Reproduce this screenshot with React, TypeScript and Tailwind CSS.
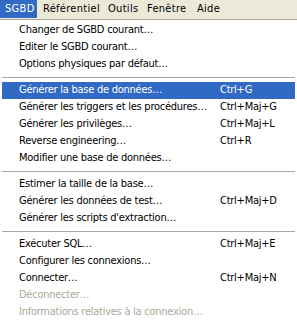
const menus = [
  { label: "SGBD", w: "w-[37px] pl-[5px]" },
  { label: "Référentiel", w: "w-[65px] pl-[6px]" },
  { label: "Outils", w: "w-[39px] pl-[6px]" },
  { label: "Fenêtre", w: "w-[50px] pl-[6px]" },
  { label: "Aide", w: "w-[30px] pl-[6px]" },
];

type Item =
  | { sep: true }
  | { label: string; shortcut?: string; active?: boolean; disabled?: boolean };

const items: Item[] = [
  { label: "Changer de SGBD courant…" },
  { label: "Editer le SGBD courant…" },
  { label: "Options physiques par défaut…" },
  { sep: true },
  { label: "Générer la base de données…", shortcut: "Ctrl+G", active: true },
  { label: "Générer les triggers et les procédures…", shortcut: "Ctrl+Maj+G" },
  { label: "Générer les privilèges…", shortcut: "Ctrl+Maj+L" },
  { label: "Reverse engineering…", shortcut: "Ctrl+R" },
  { label: "Modifier une base de données…" },
  { sep: true },
  { label: "Estimer la taille de la base…" },
  { label: "Générer les données de test…", shortcut: "Ctrl+Maj+D" },
  { label: "Générer les scripts d'extraction…" },
  { sep: true },
  { label: "Exécuter SQL…", shortcut: "Ctrl+Maj+E" },
  { label: "Configurer les connexions…" },
  { label: "Connecter…", shortcut: "Ctrl+Maj+N" },
  { label: "Déconnecter…", disabled: true },
  { label: "Informations relatives à la connexion…", disabled: true },
];

const App = () => {
  return (
    <div className="w-[297px] h-[322px] overflow-hidden bg-white text-[11px] tracking-[-0.25px] text-black font-['DejaVu_Sans_Condensed','Liberation_Sans',sans-serif]">
      {/* menu bar */}
      <div className="flex h-[20px] bg-[#ece9d8] border-b border-[#aca899] tracking-[0.3px]">
        {menus.map((m, i) => (
          <div
            key={m.label}
            className={
              i === 0
                ? `${m.w} h-[18px] flex items-center whitespace-nowrap bg-[#316ac5] text-white`
                : `${m.w} h-[18px] flex items-center whitespace-nowrap`
            }
          >
            {m.label}
          </div>
        ))}
      </div>

      {/* dropdown */}
      <div className="pt-[2px]">
        {items.map((it, i) =>
          "sep" in it ? (
            <div key={i} className="h-[9px] flex items-center px-[2px]">
              <div className="w-full h-px bg-[#aca899]" />
            </div>
          ) : (
            <div
              key={i}
              className={
                it.active
                  ? "h-[17px] mx-[2px] flex items-center bg-[#316ac5] text-white whitespace-nowrap"
                  : it.disabled
                  ? "h-[17px] mx-[2px] flex items-center text-[#aca899] whitespace-nowrap"
                  : "h-[17px] mx-[2px] flex items-center whitespace-nowrap"
              }
            >
              <span className="pl-[17px] w-[218px]">{it.label}</span>
              {it.shortcut && <span>{it.shortcut}</span>}
            </div>
          )
        )}
      </div>
    </div>
  );
};

export default App;
